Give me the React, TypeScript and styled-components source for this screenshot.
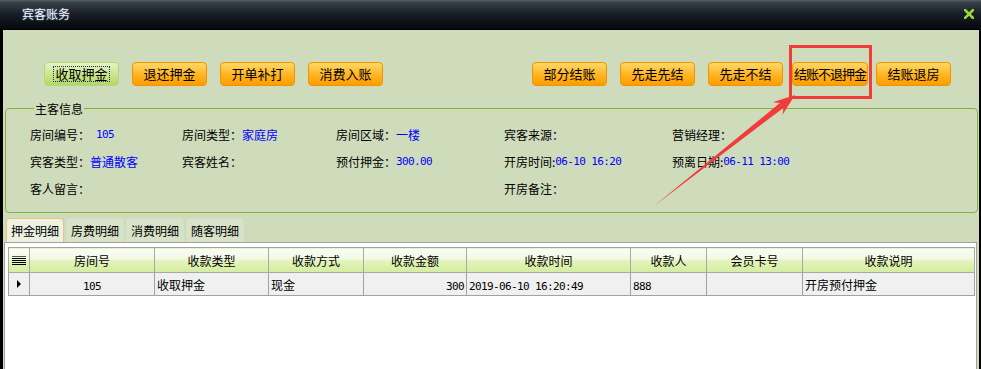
import styled, { createGlobalStyle } from "styled-components";

const GlobalStyle = createGlobalStyle`
  html, body { margin: 0; padding: 0; background: #000; }
  body {
    font-family: "Noto Sans CJK SC", "Noto Sans", sans-serif;
    font-size: 12px;
    color: #000;
  }
`;

const Window = styled.div`
  position: relative;
  width: 981px;
  height: 369px;
  overflow: hidden;
  display: flex;
  flex-direction: column;
  background: #000;
`;

const TitleBar = styled.div`
  flex: none;
  height: 30px;
  box-sizing: border-box;
  display: flex;
  align-items: center;
  justify-content: space-between;
  padding: 0 7px 1px 22px;
  background: linear-gradient(#5a626c 0, #39414b 2px, #1a2028 45%, #05080c 100%);
  border-bottom: 1px solid #000;
`;

const Title = styled.span`
  font-size: 12px;
  line-height: 14px;
  color: #eef3f8;
  text-shadow: 0 0 2px #5c7ca4;
`;

const Body = styled.div`
  flex: 1;
  min-height: 0;
  margin: 0 2px 0 3px;
  background: #cfdcbc;
  display: flex;
  flex-direction: column;
`;

const Toolbar = styled.div`
  display: flex;
  justify-content: space-between;
  padding: 32px 28px 0 41px;
`;

const ButtonGroup = styled.div`
  display: flex;
`;

const Button = styled.button<{ $active?: boolean; $w?: number; $space?: number; $tight?: boolean }>`
  width: ${(p) => p.$w ?? 75}px;
  height: 24px;
  margin: 0 0 0 ${(p) => p.$space ?? 0}px;
  padding: 0;
  box-sizing: border-box;
  display: flex;
  align-items: center;
  justify-content: center;
  white-space: nowrap;
  border: 1px solid ${(p) => (p.$active ? "#b6d67e" : "#f09400")};
  border-radius: 4px;
  background: ${(p) =>
    p.$active
      ? "linear-gradient(#e6f4c4, #cce68e 50%, #b2d866)"
      : "linear-gradient(#ffd868, #ffb828 48%, #ff9c00)"};
  font-family: "Noto Sans CJK SC", sans-serif;
  font-size: 13px;
  line-height: 14px;
  letter-spacing: ${(p) => (p.$tight ? "-1px" : "0")};
  color: #000;
`;

const Focus = styled.span`
  outline: 1px dotted #1c2a70;
  outline-offset: 0;
  padding: 0 1px;
`;

const Group = styled.fieldset`
  margin: 15px 1px 0 2px;
  padding: 5px 0 10px 24px;
  min-width: 0;
  border: 1px solid #8aae3c;
  border-radius: 4px;
`;

const Legend = styled.legend`
  margin-left: 4px;
  padding: 0 1px;
  font-size: 12px;
  line-height: 15px;
`;

const InfoGrid = styled.div`
  display: grid;
  grid-template-columns: 152px 154px 168px 168px 1fr;
  grid-auto-rows: 27px;
  align-items: center;
`;

const Field = styled.div<{ $col?: number }>`
  display: flex;
  align-items: center;
  white-space: nowrap;
  ${(p) => (p.$col ? `grid-column: ${p.$col};` : "")}
`;

const Value = styled.span<{ $mono?: boolean }>`
  color: #0000ff;
  ${(p) =>
    p.$mono
      ? `font-family: "DejaVu Sans Mono", monospace; font-size: 11px; letter-spacing: -0.62px;`
      : ""}
`;

const TabStrip = styled.div`
  display: flex;
  gap: 2px;
  padding: 5px 0 0 3px;
`;

const Tab = styled.div<{ $active?: boolean }>`
  width: 58px;
  height: 24px;
  box-sizing: border-box;
  display: flex;
  align-items: center;
  justify-content: center;
  font-size: 12px;
  border: 1px solid ${(p) => (p.$active ? "#f2c27a" : "#d6e0c6")};
  border-bottom: none;
  border-radius: 4px 4px 0 0;
  background: ${(p) => (p.$active ? "#ecf1e2" : "#d8e2c9")};
`;

const Panel = styled.div`
  flex: 1;
  margin: 0 2px 0 1px;
  padding: 4px 2px 0 3px;
  border: 1px solid #a2a2a2;
  border-bottom: none;
  background: #fff;
`;

const Grid = styled.table`
  width: 966px;
  table-layout: fixed;
  border-collapse: collapse;
  border: 1px solid #a2a2a2;
`;

const HeadCell = styled.th`
  height: 25px;
  padding: 0;
  box-sizing: border-box;
  border: 1px solid #a8a8a8;
  border-top: none;
  background: linear-gradient(#fbfdf6 0%, #f2f8e4 44%, #e4f4bc 50%, #d4eca0 100%);
  font-weight: normal;
  font-size: 12px;
  text-align: center;
  vertical-align: middle;
`;

const Cell = styled.td<{ $align?: "left" | "center" | "right" }>`
  height: 23px;
  padding: 0 2px;
  box-sizing: border-box;
  border: 1px solid #a2a2a2;
  background: #f0f0f0;
  font-size: 12px;
  white-space: nowrap;
  overflow: hidden;
  text-align: ${(p) => p.$align ?? "left"};
  vertical-align: middle;
`;

const Num = styled.span`
  font-family: "DejaVu Sans Mono", monospace;
  font-size: 11px;
  letter-spacing: -0.62px;
`;

const Overlay = styled.svg`
  position: absolute;
  left: 0;
  top: 0;
  pointer-events: none;
`;

const columns: { title: string; width: number }[] = [
  { title: "", width: 21 },
  { title: "房间号", width: 125 },
  { title: "收款类型", width: 114 },
  { title: "收款方式", width: 95 },
  { title: "收款金额", width: 103 },
  { title: "收款时间", width: 164 },
  { title: "收款人", width: 76 },
  { title: "会员卡号", width: 96 },
  { title: "收款说明", width: 172 },
];

export default function App() {
  return (
    <>
      <GlobalStyle />
      <Window>
        <TitleBar>
          <Title>宾客账务</Title>
          <svg width="10" height="10" viewBox="0 0 10 10">
            <path d="M1 1 L9 9 M9 1 L1 9" stroke="#9fd43c" strokeWidth="2.6" strokeLinecap="square" />
          </svg>
        </TitleBar>
        <Body>
          <Toolbar>
            <ButtonGroup>
              <Button $active>
                <Focus>收取押金</Focus>
              </Button>
              <Button $space={13}>退还押金</Button>
              <Button $space={13}>开单补打</Button>
              <Button $space={13}>消费入账</Button>
            </ButtonGroup>
            <ButtonGroup>
              <Button>部分结账</Button>
              <Button $space={13}>先走先结</Button>
              <Button $space={13}>先走不结</Button>
              <Button $space={9} $w={76} $tight>结账不退押金</Button>
              <Button $space={8}>结账退房</Button>
            </ButtonGroup>
          </Toolbar>

          <Group>
            <Legend>主客信息</Legend>
            <InfoGrid>
              <Field>房间编号：<Value $mono>&nbsp;105</Value></Field>
              <Field>房间类型：<Value>家庭房</Value></Field>
              <Field>房间区域：<Value>一楼</Value></Field>
              <Field>宾客来源：</Field>
              <Field>营销经理：</Field>

              <Field>宾客类型：<Value>普通散客</Value></Field>
              <Field>宾客姓名：</Field>
              <Field>预付押金：<Value $mono>300.00</Value></Field>
              <Field>开房时间:<Value $mono>06-10 16:20</Value></Field>
              <Field>预离日期:<Value $mono>06-11 13:00</Value></Field>

              <Field $col={1}>客人留言：</Field>
              <Field $col={4}>开房备注：</Field>
            </InfoGrid>
          </Group>

          <TabStrip>
            <Tab $active>押金明细</Tab>
            <Tab>房费明细</Tab>
            <Tab>消费明细</Tab>
            <Tab>随客明细</Tab>
          </TabStrip>

          <Panel>
            <Grid>
              <colgroup>
                {columns.map((c, i) => (
                  <col key={i} style={{ width: c.width }} />
                ))}
              </colgroup>
              <thead>
                <tr>
                  {columns.map((c, i) => (
                    <HeadCell key={i}>
                      {i === 0 ? (
                        <svg width="14" height="9" viewBox="0 0 14 9" style={{ display: "block", margin: "0 auto" }}>
                          {[0, 2, 4, 6, 8].map((y) => (
                            <rect key={y} x="0" y={y} width="14" height="1" fill={y === 0 ? "#555" : "#000"} />
                          ))}
                        </svg>
                      ) : (
                        c.title
                      )}
                    </HeadCell>
                  ))}
                </tr>
              </thead>
              <tbody>
                <tr>
                  <Cell $align="center">
                    <svg width="4" height="8" viewBox="0 0 4 8" style={{ display: "block", margin: "0 auto" }}>
                      <polygon points="0,0 4,4 0,8" fill="#000" />
                    </svg>
                  </Cell>
                  <Cell $align="center"><Num>105</Num></Cell>
                  <Cell>收取押金</Cell>
                  <Cell>现金</Cell>
                  <Cell $align="right"><Num>300</Num></Cell>
                  <Cell><Num>2019-06-10 16:20:49</Num></Cell>
                  <Cell><Num>888</Num></Cell>
                  <Cell></Cell>
                  <Cell>开房预付押金</Cell>
                </tr>
              </tbody>
            </Grid>
          </Panel>
        </Body>

        <Overlay width="981" height="369" viewBox="0 0 981 369">
          <rect x="790.5" y="46.5" width="80" height="51" fill="none" stroke="#f23c3c" strokeWidth="3" />
          <polygon
            points="654,206 779.8,103.1 772.7,102.2 795,95 782.5,114.8 783.4,107.9"
            fill="#f23c3c"
          />
        </Overlay>
      </Window>
    </>
  );
}
